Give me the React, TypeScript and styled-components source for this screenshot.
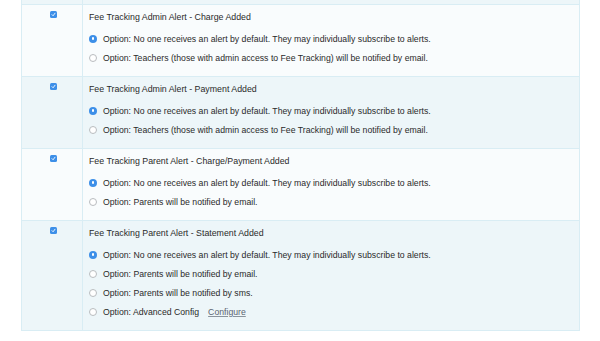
import React from "react";
import styled, { createGlobalStyle } from "styled-components";

const Global = createGlobalStyle`
  html, body { margin: 0; padding: 0; background: #ffffff; }
  body { font-family: "Liberation Sans", Arial, sans-serif; color: #2a2a2a; }
`;

const Table = styled.div`
  margin-left: 21px;
  width: 559px;
  border-left: 1px solid #d9edf4;
  border-right: 1px solid #d9edf4;
  border-bottom: 1px solid #d9edf4;
  box-sizing: border-box;
`;

const Row = styled.div<{ $alt: boolean; $h?: number }>`
  display: grid;
  grid-template-columns: 61px 1fr;
  background: ${(p) => (p.$alt ? "#edf6f9" : "#f9fcfd")};
  border-top: 1px solid #d9edf4;
  &:first-child { border-top: none; }
  ${(p) => (p.$h !== undefined ? `height: ${p.$h}px; overflow: hidden;` : "")}
`;

const CheckCell = styled.div`
  border-right: 1px solid #d9edf4;
  display: flex;
  justify-content: center;
  padding-top: 6px;
`;

const CheckBox = styled.span`
  width: 7px;
  height: 7px;
  border-radius: 1.5px;
  background: #3d8fe8;
  display: flex;
  align-items: center;
  justify-content: center;
  margin-left: 2px;
`;

const Body = styled.div`
  padding: 7px 0 9px 6px;
  display: flex;
  flex-direction: column;
`;

const Title = styled.div`
  font-size: 8.8px;
  line-height: 11px;
  margin-bottom: 6px;
`;

const Option = styled.label`
  display: flex;
  align-items: center;
  height: 19px;
  font-size: 8.7px;
`;

const Radio = styled.span<{ $on: boolean }>`
  width: 8px;
  height: 8px;
  border-radius: 50%;
  box-sizing: border-box;
  margin-right: 6px;
  flex: none;
  display: flex;
  align-items: center;
  justify-content: center;
  background: ${(p) => (p.$on ? "#3d8fe8" : "#ffffff")};
  border: ${(p) => (p.$on ? "none" : "1px solid #b9bcbf")};
  &::after {
    content: "";
    width: 2.5px;
    height: 2.5px;
    border-radius: 50%;
    background: ${(p) => (p.$on ? "#ffffff" : "transparent")};
  }
`;

const Link = styled.a`
  margin-left: 9px;
  color: #5a6470;
  text-decoration: underline;
  text-decoration-color: #8a939c;
`;

type Alert = { title: string; options: { text: string; link?: string }[] };

const NONE = "Option: No one receives an alert by default. They may individually subscribe to alerts.";

const alerts: Alert[] = [
  {
    title: "Fee Tracking Admin Alert - Charge Added",
    options: [{ text: NONE }, { text: "Option: Teachers (those with admin access to Fee Tracking) will be notified by email." }],
  },
  {
    title: "Fee Tracking Admin Alert - Payment Added",
    options: [{ text: NONE }, { text: "Option: Teachers (those with admin access to Fee Tracking) will be notified by email." }],
  },
  {
    title: "Fee Tracking Parent Alert - Charge/Payment Added",
    options: [{ text: NONE }, { text: "Option: Parents will be notified by email." }],
  },
  {
    title: "Fee Tracking Parent Alert - Statement Added",
    options: [
      { text: NONE },
      { text: "Option: Parents will be notified by email." },
      { text: "Option: Parents will be notified by sms." },
      { text: "Option: Advanced Config", link: "Configure" },
    ],
  },
];

const Check = () => (
  <svg width="5" height="5" viewBox="0 0 10 10">
    <path d="M2 5.3 L4.2 7.5 L8 2.5" stroke="#fff" strokeWidth="1.8" fill="none" strokeLinecap="round" strokeLinejoin="round" />
  </svg>
);

export default function App() {
  return (
    <>
      <Global />
      <Table>
        <Row $alt={true} $h={4}>
          <CheckCell />
          <div />
        </Row>
        {alerts.map((a, i) => (
          <Row key={a.title} $alt={i % 2 === 1}>
            <CheckCell>
              <CheckBox>
                <Check />
              </CheckBox>
            </CheckCell>
            <Body>
              <Title>{a.title}</Title>
              {a.options.map((o, j) => (
                <Option key={j}>
                  <Radio $on={j === 0} />
                  {o.text}
                  {o.link && <Link href="#">{o.link}</Link>}
                </Option>
              ))}
            </Body>
          </Row>
        ))}
      </Table>
    </>
  );
}
